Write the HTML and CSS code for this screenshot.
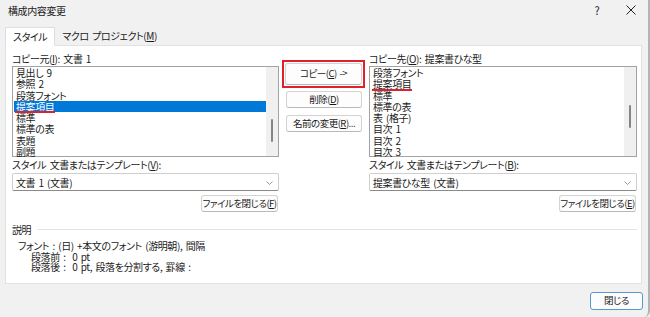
FILE: index.html
```html
<!DOCTYPE html>
<html lang="ja">
<head>
  <meta charset="UTF-8" />
  <title>構成内容変更</title>
  <link rel="stylesheet" href="styles.css">
</head>
<body>
  <div class="dialog">
    <div class="titlebar">
      <span class="title">構成内容変更</span>
      <span class="title-btn">?</span>
      <span class="title-btn">
        <svg width="10" height="10" viewBox="0 0 10 10"><path d="M0.5 0.5L9.5 9.5M9.5 0.5L0.5 9.5" stroke="#222" stroke-width="1" fill="none"/></svg>
      </span>
    </div>

    <div class="tabs">
      <span class="tab active">スタイル</span>
      <span class="tab">マクロ プロジェクト(<u>M</u>)</span>
    </div>

    <div class="panel">
      <div class="columns">
        <div class="side">
          <div class="label">コピー元(<u>I</u>): 文書 1</div>
          <div class="listbox">
            <div class="items">
              <div class="item">見出し 9</div>
              <div class="item">参照 2</div>
              <div class="item">段落フォント</div>
              <div class="item selected marked">提案項目</div>
              <div class="item">標準</div>
              <div class="item">標準の表</div>
              <div class="item">表題</div>
              <div class="item">副題</div>
            </div>
            <div class="scroll"><div class="thumb thumb-low"></div></div>
          </div>
          <div class="label">スタイル 文書またはテンプレート(<u>V</u>):</div>
          <div class="combo">
            <span>文書 1 (文書)</span>
            <svg class="chevron" width="7" height="4" viewBox="0 0 7 4"><path d="M0.5 0.5L3.5 3.5L6.5 0.5" stroke="#9a9a9a" fill="none"/></svg>
          </div>
          <div class="side-foot">
            <button class="btn">ファイルを閉じる(<u>F</u>)</button>
          </div>
        </div>

        <div class="actions">
          <div class="copy-frame">
            <button class="btn btn-copy">コピー(<u>C</u>) -&gt;</button>
          </div>
          <button class="btn btn-action btn-delete">削除(<u>D</u>)</button>
          <button class="btn btn-action btn-rename">名前の変更(<u>R</u>)...</button>
        </div>

        <div class="side">
          <div class="label">コピー先(<u>O</u>): 提案書ひな型</div>
          <div class="listbox">
            <div class="items">
              <div class="item">段落フォント</div>
              <div class="item marked">提案項目</div>
              <div class="item">標準</div>
              <div class="item">標準の表</div>
              <div class="item">表 (格子)</div>
              <div class="item">目次 1</div>
              <div class="item">目次 2</div>
              <div class="item">目次 3</div>
            </div>
            <div class="scroll"><div class="thumb thumb-high"></div></div>
          </div>
          <div class="label">スタイル 文書またはテンプレート(<u>B</u>):</div>
          <div class="combo">
            <span>提案書ひな型 (文書)</span>
            <svg class="chevron" width="7" height="4" viewBox="0 0 7 4"><path d="M0.5 0.5L3.5 3.5L6.5 0.5" stroke="#9a9a9a" fill="none"/></svg>
          </div>
          <div class="side-foot">
            <button class="btn">ファイルを閉じる(<u>E</u>)</button>
          </div>
        </div>
      </div>

      <div class="desc">
        <div class="desc-head"><span>説明</span></div>
        <div class="desc-body">
          <div>フォント : (日) +本文のフォント (游明朝), 間隔</div>
          <div class="indent">段落前 :&nbsp; 0 pt</div>
          <div class="indent">段落後 :&nbsp; 0 pt, 段落を分割する, 罫線 :</div>
        </div>
      </div>
    </div>

    <div class="footer">
      <button class="btn btn-default">閉じる</button>
    </div>
  </div>
</body>
</html>
```

FILE: styles.css
```css
* {
  box-sizing: border-box;
}

body {
  margin: 0;
  background: #f0f0f0;
  font-family: "Noto Sans CJK JP", "Noto Sans", sans-serif;
  font-size: 10px;
  letter-spacing: -0.4px;
  word-spacing: 1.5px;
  font-feature-settings: "palt";
  color: #1b1b1b;
}

u {
  text-underline-offset: 1px;
}

.dialog {
  width: 650px;
  height: 317px;
  background: #f1f1f1;
  border-right: 2px solid #b4b4b4;
  border-bottom-right-radius: 6px;
}

.titlebar {
  height: 20px;
  display: flex;
  align-items: center;
  padding-left: 8px;
}

.title {
  flex: 1;
}

.title-btn {
  width: 34px;
  display: flex;
  justify-content: center;
  font-size: 11px;
}

.tabs {
  height: 25px;
  display: flex;
  align-items: flex-end;
  padding-left: 5px;
}

.tab {
  height: 18px;
  line-height: 17px;
  padding: 0 7px;
}

.tab.active {
  background: #fff;
  border: 1px solid #dedede;
  border-bottom: none;
  height: 19px;
  margin-bottom: -1px;
  position: relative;
}

.panel {
  width: 637px;
  height: 239px;
  margin-left: 5px;
  background: #fff;
  border: 1px solid #e2e2e2;
  padding: 6px 4px 0 6px;
}

.columns {
  display: grid;
  grid-template-columns: 267px 90px 268px;
}

.label {
  height: 14px;
  line-height: 14px;
  white-space: nowrap;
}

.side .label + .combo,
.listbox + .label {
  margin-top: 1px;
}

.listbox {
  height: 91px;
  border: 1px solid #a3a3a3;
  display: flex;
}

.items {
  flex: 1;
  padding-left: 1px;
}

.item {
  height: 11.3px;
  line-height: 11.3px;
  padding-left: 2px;
  white-space: nowrap;
  position: relative;
}

.item.selected {
  background: #0078d7;
  color: #fff;
}

.item.marked::after {
  content: "";
  position: absolute;
  left: 1px;
  bottom: -1px;
  width: 40px;
  height: 2px;
  background: #d9232e;
}

.scroll {
  width: 12px;
  background: #f0f0f0;
  display: flex;
  justify-content: center;
}

.thumb {
  width: 2px;
  height: 23px;
  background: #858585;
  border-radius: 1px;
}

.thumb-low {
  margin-top: 52px;
}

.thumb-high {
  margin-top: 38px;
}

.combo {
  height: 18px;
  border: 1px solid #cfcfcf;
  border-bottom-color: #8a8a8a;
  border-radius: 2px;
  display: flex;
  align-items: center;
  justify-content: space-between;
  padding: 0 5px 0 3px;
}

.chevron {
  margin-top: 1px;
}

.side-foot {
  display: flex;
  justify-content: flex-end;
  margin-top: 4px;
  padding-right: 1px;
}

.btn {
  font-family: inherit;
  font-size: 9.5px;
  letter-spacing: -0.5px;
  word-spacing: 1px;
  font-feature-settings: "palt";
  white-space: nowrap;
  line-height: 1;
  color: #1b1b1b;
  height: 17px;
  width: 77px;
  padding: 0;
  background: #fdfdfd;
  border: 1px solid #d3d3d3;
  border-bottom-color: #b9b9b9;
  border-radius: 3px;
}

.actions {
  display: flex;
  flex-direction: column;
  align-items: flex-start;
  padding: 8px 0 0 3px;
}

.copy-frame {
  border: 2px solid #e0202a;
  padding: 1px;
}

.btn-copy {
  height: 22px;
}

.btn-action {
  width: 76px;
  margin-left: 4px;
}

.btn-delete {
  margin-top: 3px;
}

.btn-rename {
  margin-top: 7px;
}

.desc {
  margin-top: 10px;
}

.desc-head {
  display: flex;
  align-items: center;
  gap: 6px;
  height: 14px;
}

.desc-head::after {
  content: "";
  flex: 1;
  height: 1px;
  background: #e3e3e3;
}

.desc-body {
  margin-top: 5px;
  padding-left: 6px;
  line-height: 10.5px;
}

.indent {
  padding-left: 13px;
}

.footer {
  display: flex;
  justify-content: flex-end;
  padding: 8px 5px 0 0;
}

.btn-default {
  width: 53px;
  height: 18px;
  border: 1px solid #5a96d2;
}
```
